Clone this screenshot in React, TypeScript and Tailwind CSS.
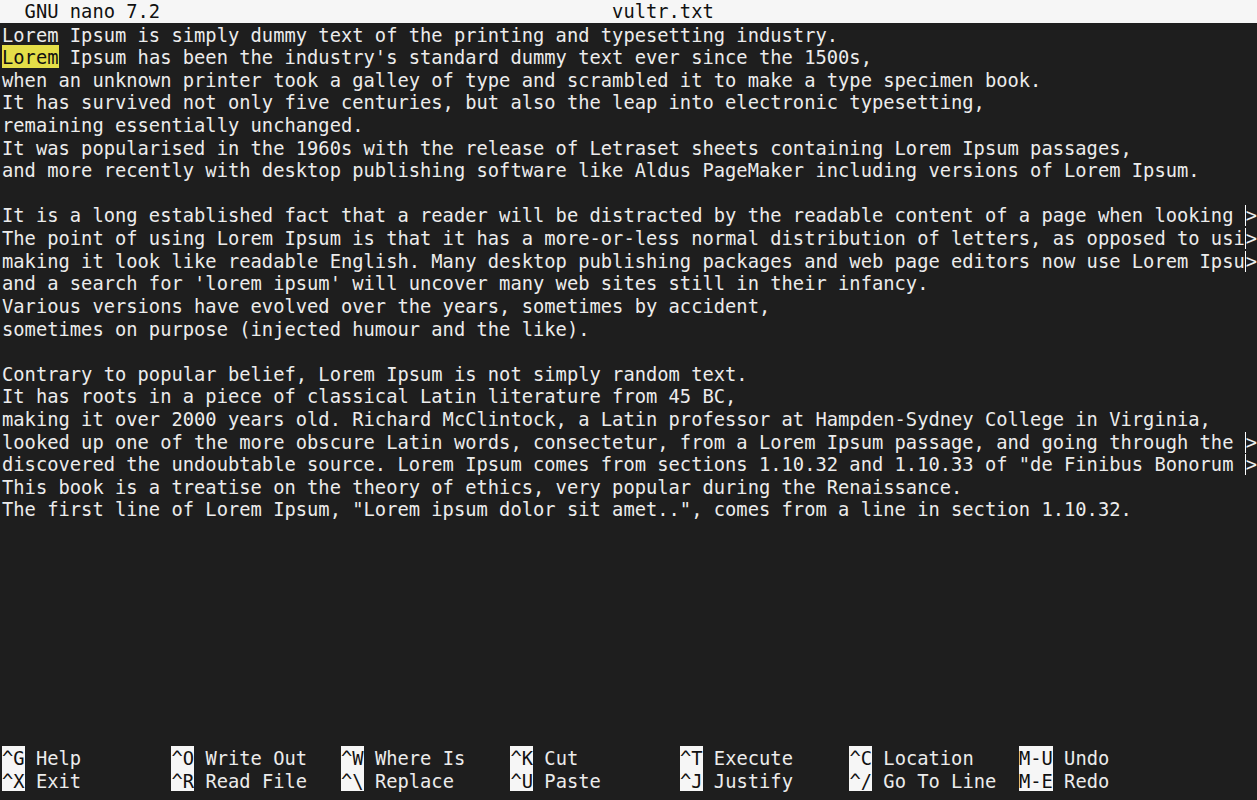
const lines: string[] = [
  "Lorem Ipsum is simply dummy text of the printing and typesetting industry.",
  "",
  "when an unknown printer took a galley of type and scrambled it to make a type specimen book.",
  "It has survived not only five centuries, but also the leap into electronic typesetting,",
  "remaining essentially unchanged.",
  "It was popularised in the 1960s with the release of Letraset sheets containing Lorem Ipsum passages,",
  "and more recently with desktop publishing software like Aldus PageMaker including versions of Lorem Ipsum.",
  "",
  "It is a long established fact that a reader will be distracted by the readable content of a page when looking >",
  "The point of using Lorem Ipsum is that it has a more-or-less normal distribution of letters, as opposed to usi>",
  "making it look like readable English. Many desktop publishing packages and web page editors now use Lorem Ipsu>",
  "and a search for 'lorem ipsum' will uncover many web sites still in their infancy.",
  "Various versions have evolved over the years, sometimes by accident,",
  "sometimes on purpose (injected humour and the like).",
  "",
  "Contrary to popular belief, Lorem Ipsum is not simply random text.",
  "It has roots in a piece of classical Latin literature from 45 BC,",
  "making it over 2000 years old. Richard McClintock, a Latin professor at Hampden-Sydney College in Virginia,",
  "looked up one of the more obscure Latin words, consectetur, from a Lorem Ipsum passage, and going through the >",
  "discovered the undoubtable source. Lorem Ipsum comes from sections 1.10.32 and 1.10.33 of \"de Finibus Bonorum >",
  "This book is a treatise on the theory of ethics, very popular during the Renaissance.",
  "The first line of Lorem Ipsum, \"Lorem ipsum dolor sit amet..\", comes from a line in section 1.10.32.",
];

const shortcuts: [string, string][][] = [
  [["^G", "Help"], ["^O", "Write Out"], ["^W", "Where Is"], ["^K", "Cut"], ["^T", "Execute"], ["^C", "Location"], ["M-U", "Undo"]],
  [["^X", "Exit"], ["^R", "Read File"], ["^\\", "Replace"], ["^U", "Paste"], ["^J", "Justify"], ["^/", "Go To Line"], ["M-E", "Redo"]],
];

function Row({ children }: { children?: React.ReactNode }) {
  return <div className="h-[22.62px] leading-[26px] whitespace-pre">{children}</div>;
}

// reverse-video cell, filled to the full row height like a terminal cell
function Rev({ children, className = "bg-[#f6f6f6]" }: { children: React.ReactNode; className?: string }) {
  return (
    <span className={`inline-block h-[22.62px] align-top leading-[26px] text-[#111] ${className}`}>{children}</span>
  );
}

function TextLine({ text }: { text: string }) {
  if (text.endsWith(">")) {
    return (
      <Row>
        {text.slice(0, -1)}
        <span className="border-l border-white">{">"}</span>
      </Row>
    );
  }
  return <Row>{text}</Row>;
}

export default function App() {
  const blank = 33 - 1 - lines.length;
  return (
    <div
      className="w-[1257px] h-[800px] overflow-hidden bg-[#1e1e1e] text-[#ececec] text-[18.77px] pl-[2px]"
      style={{ fontFamily: '"DejaVu Sans Mono", "Liberation Mono", monospace' }}
    >
      <div className="bg-[#f6f6f6] text-[#111] -ml-[2px] pl-[2px] h-[22.62px] leading-[24px] whitespace-pre">
        {"  GNU nano 7.2                                        vultr.txt"}
      </div>
      <TextLine text={lines[0]} />
      <Row>
        <Rev className="bg-[#e4de48]">Lorem</Rev>
        {" Ipsum has been the industry's standard dummy text ever since the 1500s,"}
      </Row>
      {lines.slice(2).map((l, i) => (
        <TextLine key={i} text={l} />
      ))}
      {Array.from({ length: blank }).map((_, i) => (
        <Row key={"b" + i} />
      ))}
      {shortcuts.map((row, r) => (
        <Row key={"s" + r}>
          {row.map(([k, label], i) => {
            const rest = label.padEnd(15 - k.length - 1, " ");
            return (
              <span key={i}>
                <Rev>{k}</Rev>
                {" " + (i === row.length - 1 ? label : rest)}
              </span>
            );
          })}
        </Row>
      ))}
    </div>
  );
}
